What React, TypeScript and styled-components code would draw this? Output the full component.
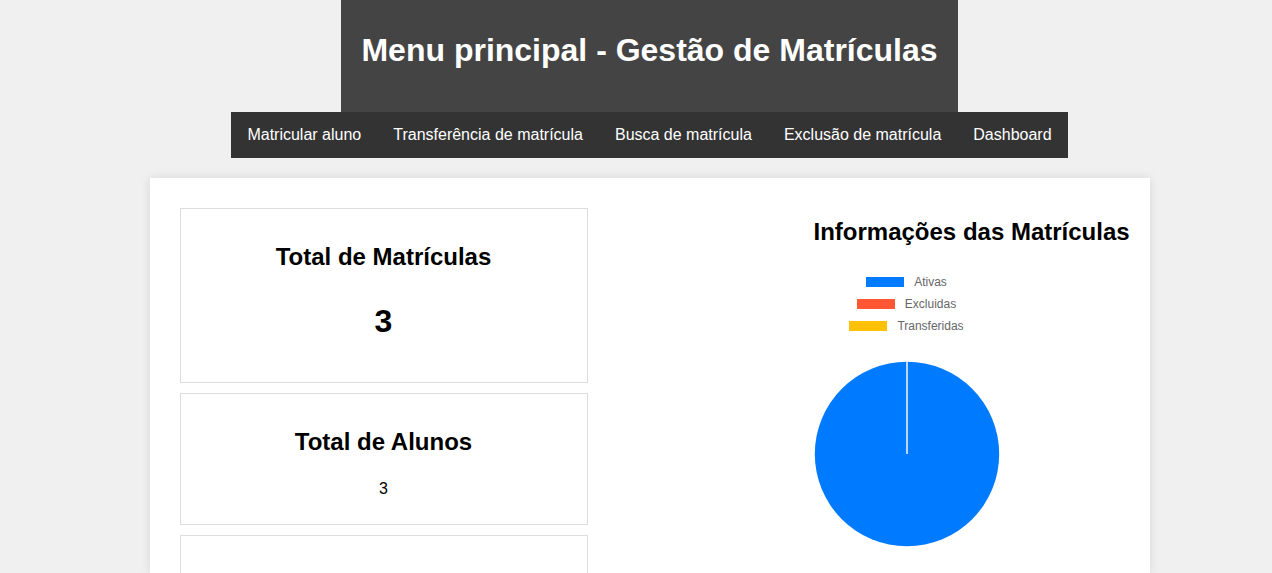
import React from "react";
import styled, { createGlobalStyle } from "styled-components";

const GlobalStyle = createGlobalStyle`
  html, body {
    margin: 0;
    padding: 0;
    background: #f0f0f0;
    font-family: "Liberation Sans", Arial, sans-serif;
  }
`;

const Page = styled.div`
  padding-left: 27px;
  display: flex;
  flex-direction: column;
  align-items: center;
`;

const Header = styled.header`
  background: #444;
  color: #fff;
  padding: 11px 20px 21px;
`;

const Title = styled.h1`
  margin: 21.44px 0;
  font-size: 32px;
  font-weight: bold;
`;

const Nav = styled.nav`
  background: #333;
  display: flex;
`;

const NavLink = styled.a`
  color: #fff;
  text-decoration: none;
  font-size: 16px;
  padding: 14px 16px;
  line-height: 18px;
`;

const Main = styled.main`
  margin-top: 20px;
  width: 1000px;
  box-sizing: border-box;
  background: #fff;
  padding: 30px;
  box-shadow: 0 0 10px rgba(0, 0, 0, 0.1);
  display: grid;
  grid-template-columns: 408px 1fr;
  column-gap: 226px;
  height: 395px;
  overflow: hidden;
`;

const Cards = styled.div`
  display: flex;
  flex-direction: column;
  gap: 10px;
`;

const Card = styled.section`
  border: 1px solid #ddd;
  padding: 10px;
  text-align: center;
  min-height: 60px;
`;

const CardTitle = styled.h2`
  margin: 24px 0;
  font-size: 24px;
  font-weight: bold;
`;

const CardValue = styled.p<{ $big?: boolean }>`
  margin: 1em 0;
  font-size: ${(p) => (p.$big ? "32px" : "16px")};
  font-weight: ${(p) => (p.$big ? "bold" : "normal")};
`;

const ChartColumn = styled.div`
  display: flex;
  flex-direction: column;
  align-items: flex-start;
`;

const ChartTitle = styled.h2`
  margin: 10px 0 0 0;
  font-size: 24px;
  font-weight: bold;
  white-space: nowrap;
`;

const ChartBox = styled.div`
  width: 186px;
  margin-top: 30px;
  display: flex;
  flex-direction: column;
  align-items: center;
`;

const Legend = styled.ul`
  list-style: none;
  margin: 0;
  padding: 0;
  display: flex;
  flex-direction: column;
  align-items: center;
  gap: 10px;
`;

const LegendItem = styled.li`
  display: flex;
  align-items: center;
  gap: 10px;
  font-size: 12px;
  line-height: 12px;
  color: #666;
`;

const Swatch = styled.span<{ $color: string }>`
  width: 38px;
  height: 10px;
  background: ${(p) => p.$color};
`;

const PieWrap = styled.div`
  margin-top: 29px;
  line-height: 0;
`;

const items = [
  { label: "Ativas", color: "#007bff" },
  { label: "Excluidas", color: "#ff5733" },
  { label: "Transferidas", color: "#ffc107" },
];

const links = [
  "Matricular aluno",
  "Transferência de matrícula",
  "Busca de matrícula",
  "Exclusão de matrícula",
  "Dashboard",
];

export default function App() {
  return (
    <>
      <GlobalStyle />
      <Page>
        <Header>
          <Title>Menu principal - Gestão de Matrículas</Title>
        </Header>
        <Nav>
          {links.map((l) => (
            <NavLink key={l} href="#">
              {l}
            </NavLink>
          ))}
        </Nav>
        <Main>
          <Cards>
            <Card>
              <CardTitle>Total de Matrículas</CardTitle>
              <CardValue $big>3</CardValue>
            </Card>
            <Card>
              <CardTitle>Total de Alunos</CardTitle>
              <CardValue>3</CardValue>
            </Card>
            <Card />
          </Cards>
          <ChartColumn>
            <ChartTitle>Informações das Matrículas</ChartTitle>
            <ChartBox>
              <Legend>
                {items.map((i) => (
                  <LegendItem key={i.label}>
                    <Swatch $color={i.color} />
                    {i.label}
                  </LegendItem>
                ))}
              </Legend>
              <PieWrap>
                <svg width="186" height="186" viewBox="0 0 186 186">
                  <circle cx="93" cy="93" r="92.2" fill="#007bff" />
                  <line x1="93" y1="93" x2="93" y2="0" stroke="#e6eef8" strokeWidth="1.6" />
                </svg>
              </PieWrap>
            </ChartBox>
          </ChartColumn>
        </Main>
      </Page>
    </>
  );
}
